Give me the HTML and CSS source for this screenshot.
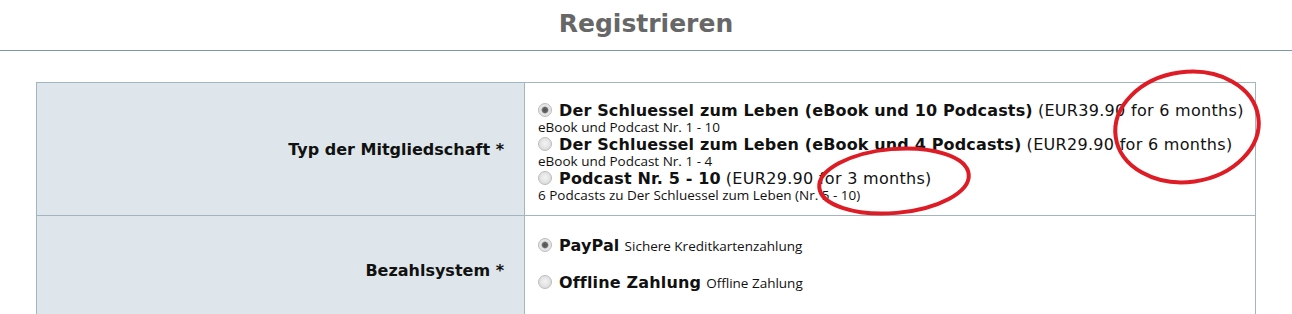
FILE: index.html
```html
<!DOCTYPE html>
<html lang="de">
<head>
  <meta charset="UTF-8">
  <title>Registrieren</title>
  <link rel="stylesheet" href="styles.css">
</head>
<body>
<h1 class="page-title">Registrieren</h1>

<table class="reg-table">
  <colgroup>
    <col class="label-col">
    <col>
  </colgroup>
  <tr>
    <th class="label-cell">Typ der Mitgliedschaft *</th>
    <td class="field-cell">
      <div class="option">
        <label class="option-main"><input type="radio" name="level" checked><b>Der Schluessel zum Leben (eBook und 10 Podcasts)</b> <span class="price">(EUR39.90 for 6 months)</span></label>
        <div class="option-desc">eBook und Podcast Nr. 1 - 10</div>
      </div>
      <div class="option">
        <label class="option-main"><input type="radio" name="level"><b>Der Schluessel zum Leben (eBook und 4 Podcasts)</b> <span class="price">(EUR29.90 for 6 months)</span></label>
        <div class="option-desc">eBook und Podcast Nr. 1 - 4</div>
      </div>
      <div class="option">
        <label class="option-main"><input type="radio" name="level"><b>Podcast Nr. 5 - 10</b> <span class="price">(EUR29.90 for 3 months)</span></label>
        <div class="option-desc">6 Podcasts zu Der Schluessel zum Leben (Nr. 5 - 10)</div>
      </div>
    </td>
  </tr>
  <tr>
    <th class="label-cell">Bezahlsystem *</th>
    <td class="field-cell pay-cell">
      <label class="pay-option"><input type="radio" name="gateway" checked><b>PayPal</b> <span class="pay-desc">Sichere Kreditkartenzahlung</span></label>
      <label class="pay-option"><input type="radio" name="gateway"><b>Offline Zahlung</b> <span class="pay-desc">Offline Zahlung</span></label>
    </td>
  </tr>
</table>

<!-- hand drawn marks on the screenshot -->
<svg class="marks" width="1292" height="314" viewBox="0 0 1292 314">
  <ellipse cx="1187" cy="127" rx="72" ry="55" transform="rotate(-8 1187 127)"/>
  <ellipse cx="894" cy="181" rx="75" ry="32" transform="rotate(-5 894 181)"/>
</svg>
</body>
</html>
```

FILE: styles.css
```css
body {
  margin: 0;
  padding: 0;
  background: #fff;
  font-family: "DejaVu Sans", Verdana, sans-serif;
  color: #111;
  position: relative;
  overflow: hidden;
}

.page-title {
  margin: 0;
  padding: 8px 0 10px;
  text-align: center;
  font-size: 25px;
  line-height: 32px;
  color: #676767;
  border-bottom: 1px solid #7b98a3;
}

.reg-table {
  margin: 31px 36px 0;
  width: calc(100% - 72px);
  border-collapse: collapse;
  table-layout: fixed;
}

.label-col {
  width: 488px;
}

.reg-table th,
.reg-table td {
  border: 1px solid #a3b6bf;
}

.label-cell {
  background: #dee6eb;
  text-align: right;
  font-size: 16px;
  padding: 0 20px;
  vertical-align: middle;
}

.field-cell {
  padding: 18px 13px 12px 12px;
  vertical-align: top;
}

.option-main,
.pay-option {
  display: block;
  font-size: 16px;
  line-height: 19px;
  white-space: nowrap;
}

.option-main b,
.pay-option b {
  letter-spacing: 0.15px;
}

.price {
  letter-spacing: 0.3px;
}

.option-desc {
  font-family: "Open Sans", sans-serif;
  font-size: 13.5px;
  line-height: 15px;
  padding-left: 1px;
}

input[type="radio"] {
  appearance: none;
  width: 14px;
  height: 14px;
  margin: 0 7px 0 1px;
  vertical-align: -1px;
  border: 1px solid #bdbdbd;
  border-radius: 50%;
  background: radial-gradient(circle at 50% 45%, #f4f4f4 0, #e2e2e2 55%, #cfcfcf 100%);
}

input[type="radio"]:checked {
  background: radial-gradient(circle, #4f4f4f 0, #666 2.6px, #dcdcdc 3.8px, #e8e8e8 60%, #d0d0d0 100%);
}

.pay-cell {
  padding: 20px 13px 31px 12px;
}

.pay-option {
  line-height: 20px;
  margin-bottom: 17px;
}

.pay-option:last-child {
  margin-bottom: 0;
}

.pay-desc {
  font-family: "Open Sans", sans-serif;
  font-size: 13.5px;
}

.marks {
  position: absolute;
  left: 0;
  top: 0;
  pointer-events: none;
}

.marks ellipse {
  fill: none;
  stroke: #dd1c25;
  stroke-width: 4;
}
```
